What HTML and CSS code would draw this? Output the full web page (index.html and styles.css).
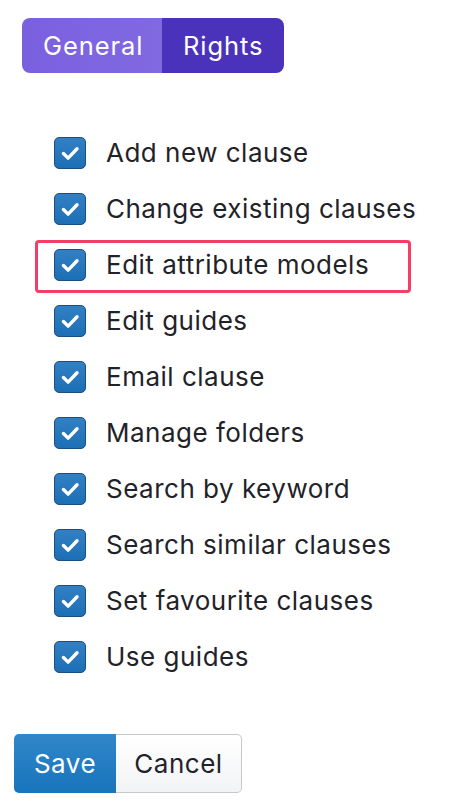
FILE: index.html
```html
<!DOCTYPE html>
<html lang="en">
<head>
<meta charset="utf-8">
<title>Rights</title>
<link rel="stylesheet" href="styles.css">
</head>
<body>
<div class="page">
  <div class="tabs">
    <div class="tab tab-general">General</div>
    <div class="tab tab-rights">Rights</div>
  </div>

  <ul class="rights">
    <li class="right"><span class="box"><svg viewBox="0 0 32 32"><path d="M9 16.5l5 5 9.5-10"/></svg></span><span class="label">Add new clause</span></li>
    <li class="right"><span class="box"><svg viewBox="0 0 32 32"><path d="M9 16.5l5 5 9.5-10"/></svg></span><span class="label">Change existing clauses</span></li>
    <li class="right highlight"><span class="box"><svg viewBox="0 0 32 32"><path d="M9 16.5l5 5 9.5-10"/></svg></span><span class="label">Edit attribute models</span></li>
    <li class="right"><span class="box"><svg viewBox="0 0 32 32"><path d="M9 16.5l5 5 9.5-10"/></svg></span><span class="label">Edit guides</span></li>
    <li class="right"><span class="box"><svg viewBox="0 0 32 32"><path d="M9 16.5l5 5 9.5-10"/></svg></span><span class="label">Email clause</span></li>
    <li class="right"><span class="box"><svg viewBox="0 0 32 32"><path d="M9 16.5l5 5 9.5-10"/></svg></span><span class="label">Manage folders</span></li>
    <li class="right"><span class="box"><svg viewBox="0 0 32 32"><path d="M9 16.5l5 5 9.5-10"/></svg></span><span class="label">Search by keyword</span></li>
    <li class="right"><span class="box"><svg viewBox="0 0 32 32"><path d="M9 16.5l5 5 9.5-10"/></svg></span><span class="label">Search similar clauses</span></li>
    <li class="right"><span class="box"><svg viewBox="0 0 32 32"><path d="M9 16.5l5 5 9.5-10"/></svg></span><span class="label">Set favourite clauses</span></li>
    <li class="right"><span class="box"><svg viewBox="0 0 32 32"><path d="M9 16.5l5 5 9.5-10"/></svg></span><span class="label">Use guides</span></li>
  </ul>

  <div class="actions">
    <button class="btn btn-save">Save</button>
    <button class="btn btn-cancel">Cancel</button>
  </div>
</div>
</body>
</html>
```

FILE: styles.css
```css
*, *::before, *::after { box-sizing: border-box; }

html, body {
  margin: 0;
  padding: 0;
  background: #ffffff;
}

body {
  font-family: Inter, "Noto Sans", "Liberation Sans", sans-serif;
  color: #1f2329;
}

.page {
  padding: 18px 0 0 0;
}

.tabs {
  display: inline-flex;
  margin-left: 22px;
  height: 55px;
  border-radius: 8px;
  overflow: hidden;
}

.tab {
  display: flex;
  align-items: center;
  font-size: 25.5px;
  color: #ffffff;
  letter-spacing: 0.9px;
}

.tab-general {
  width: 140px;
  padding-left: 21px;
  background: linear-gradient(90deg, #7a60df 0%, #8169e2 100%);
}

.tab-rights {
  width: 122px;
  padding-left: 21px;
  background: #4a32bb;
}

.rights {
  list-style: none;
  margin: 52px 0 0 0;
  padding: 0;
}

.right {
  display: flex;
  align-items: center;
  height: 56px;
  padding-left: 54px;
}

.highlight {
  position: relative;
}

.highlight::after {
  content: "";
  position: absolute;
  left: 35px;
  top: 3px;
  width: 376px;
  height: 53px;
  border: 3px solid #f33e66;
  border-radius: 4px;
}

.box {
  width: 32px;
  height: 32px;
  flex: 0 0 32px;
  border-radius: 5px;
  border: 1.5px solid #1b4f7e;
  background: linear-gradient(180deg, #3380c4 0%, #1c6fb5 100%);
  display: flex;
  align-items: center;
  justify-content: center;
}

.box svg {
  width: 30px;
  height: 30px;
  fill: none;
  stroke: #ffffff;
  stroke-width: 3.6;
  stroke-linecap: round;
  stroke-linejoin: round;
}

.label {
  margin-left: 20px;
  margin-top: -2px;
  font-size: 26px;
  letter-spacing: 0.5px;
  color: #1f2329;
}

.actions {
  display: flex;
  margin: 49px 0 0 14px;
}

.btn {
  font-family: Inter, "Noto Sans", "Liberation Sans", sans-serif;
  font-size: 26px;
  letter-spacing: 0.5px;
  height: 59px;
  margin: 0;
  padding: 0;
  cursor: pointer;
}

.btn-save {
  width: 102px;
  color: #ffffff;
  border: none;
  border-radius: 5px 0 0 5px;
  background: linear-gradient(180deg, #3186c8 0%, #1874bc 100%);
}

.btn-cancel {
  width: 126px;
  color: #1f2329;
  border: 1.5px solid #c7c8cc;
  border-left: none;
  border-radius: 0 5px 5px 0;
  background: linear-gradient(180deg, #ffffff 0%, #f2f3f5 100%);
}
```
